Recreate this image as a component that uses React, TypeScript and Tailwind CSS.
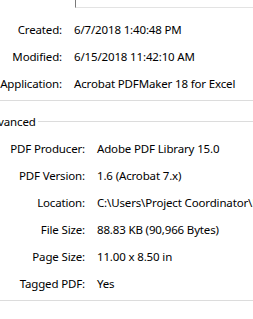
const general = [
  ['Created:', '6/7/2018 1:40:48 PM'],
  ['Modified:', '6/15/2018 11:42:10 AM'],
  ['Application:', 'Acrobat PDFMaker 18 for Excel'],
];

const advanced = [
  ['PDF Producer:', 'Adobe PDF Library 15.0'],
  ['PDF Version:', '1.6 (Acrobat 7.x)'],
  ['Location:', 'C:\\Users\\Project Coordinator\\Desktop'],
  ['File Size:', '88.83 KB (90,966 Bytes)'],
  ['Page Size:', '11.00 x 8.50 in'],
  ['Tagged PDF:', 'Yes'],
];

const Row = ({ label, value, labelWidth }: { label: string; value: string; labelWidth: string }) => (
  <div className="flex h-[27px] items-center gap-[12px] whitespace-nowrap">
    <div className={`${labelWidth} shrink-0 text-right`}>{label}</div>
    <div>{value}</div>
  </div>
);

export default function App() {
  return (
    <div
      className="h-[319px] w-[253px] overflow-hidden bg-white text-[11.5px] tracking-[-0.15px] text-black"
      style={{ fontFamily: '"Noto Sans", Arial, sans-serif' }}
    >
      <div className="h-[8px]">
        <div className="ml-[75px] h-full border-b border-l border-b-[#e3e3e3] border-l-[#7a7a7a]" />
      </div>

      <div className="mt-[8px]">
        {general.map(([l, v]) => (
          <Row key={l} label={l} value={v} labelWidth="w-[62px]" />
        ))}
      </div>

      <div className="mt-[3px] h-px bg-[#dcdcdc]" />

      <div className="mt-[11px] flex h-[19px] items-center gap-[2px]">
        <span className="-ml-[16px] whitespace-nowrap">Advanced</span>
        <div className="h-px flex-1 bg-[#dcdcdc]" />
      </div>

      <div className="mt-[4px]">
        {advanced.map(([l, v]) => (
          <Row key={l} label={l} value={v} labelWidth="w-[85px]" />
        ))}
      </div>

      <div className="mt-[3px] h-px bg-[#dcdcdc]" />
    </div>
  );
}
